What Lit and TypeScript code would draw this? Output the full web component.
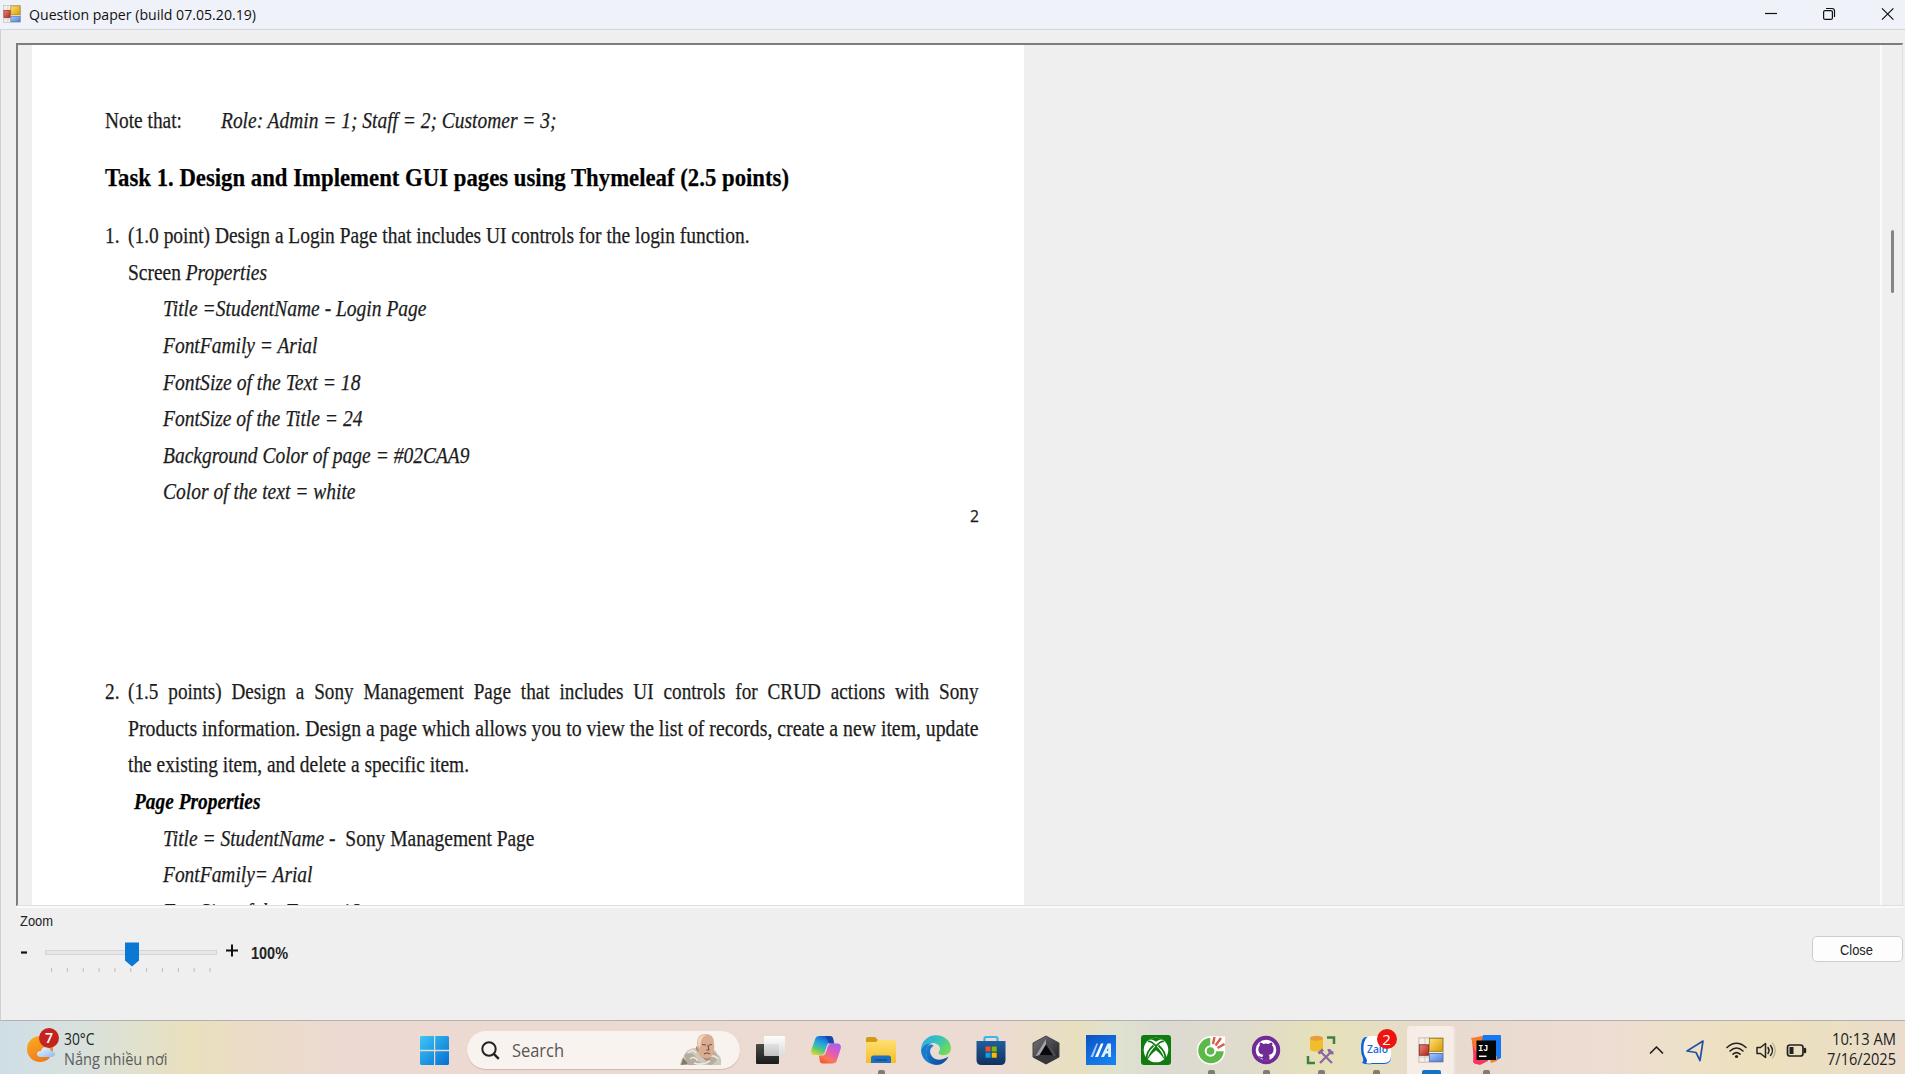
import { LitElement, html, css, svg, nothing } from "lit";
import { customElement, property, query } from "lit/decorators.js";

/** Condenses or stretches its slotted line horizontally to an exact width. */
@customElement("fit-text")
class FitText extends LitElement {
  static styles = css`
    :host { display: block; flex: none; white-space: pre; }
    .ink { display: inline-block; transform-origin: 0 50%; white-space: pre; }
  `;
  @property({ type: Number }) width = 100;
  @query(".ink") ink!: HTMLElement;
  firstUpdated() {
    const natural = this.ink.getBoundingClientRect().width;
    this.style.width = this.width + "px";
    if (natural > 0) this.ink.style.transform = `scaleX(${this.width / natural})`;
  }
  render() {
    return html`<span class="ink"><slot></slot></span>`;
  }
}

const formsIcon = svg`
  <rect x="1" y="1" width="28" height="28" fill="#f4f0e6" stroke="#bdb8ae" stroke-width="1"/>
  <path d="M1 9h11M1 23h28M8 1v28" stroke="#c9c5bd" stroke-width="1"/>
  <rect x="13" y="1.500" width="15.500" height="15" fill="url(#fy)" stroke="#9c7a12"/>
  <rect x="1.500" y="9" width="10.500" height="12" fill="url(#fr)" stroke="#8d2620"/>
  <rect x="13" y="19" width="15.500" height="9" fill="url(#fb)" stroke="#4a6fb5"/>
  <defs>
    <linearGradient id="fy" x2="1" y2="1"><stop stop-color="#ffe27a"/><stop offset="1" stop-color="#d79b00"/></linearGradient>
    <linearGradient id="fr" x2="1" y2="1"><stop stop-color="#e88b80"/><stop offset="1" stop-color="#b5261c"/></linearGradient>
    <linearGradient id="fb" x2="1" y2="1"><stop stop-color="#a9c8ff"/><stop offset="1" stop-color="#4d7edb"/></linearGradient>
  </defs>`;

interface App { name: string; art: unknown; running?: boolean; active?: boolean; badge?: string; }

const apps: App[] = [
  { name: "Task view", art: svg`
    <defs><linearGradient id="tv" y2="1" x2="0"><stop stop-color="#4a4a48"/><stop offset="1" stop-color="#1b1b1b"/></linearGradient>
    <linearGradient id="tw" y2="1" x2="0"><stop stop-color="#fff" stop-opacity=".95"/><stop offset="1" stop-color="#dcdcdc" stop-opacity=".85"/></linearGradient></defs>
    <rect x="0" y="9" width="23" height="20" rx="1" fill="url(#tv)"/><rect x="8" y="1" width="21" height="20" rx="1" fill="url(#tw)"/>` },
  { name: "Copilot", art: svg`
    <defs>
      <linearGradient id="c1" x1=".7" y1="0" x2=".2" y2="1"><stop stop-color="#1b4fc4"/><stop offset=".4" stop-color="#21a5e8"/><stop offset=".7" stop-color="#55c77d"/><stop offset="1" stop-color="#d8da2c"/></linearGradient>
      <linearGradient id="c2" x1=".8" y1="0" x2=".2" y2="1"><stop stop-color="#a75df0"/><stop offset=".45" stop-color="#e65bb5"/><stop offset=".75" stop-color="#fb7659"/><stop offset="1" stop-color="#f2562c"/></linearGradient>
    </defs>
    <path d="M9 1h9c2 0 3 1 3.500 3l1 4h-3c-2 0-3 1-3.700 3l-2 6c-.7 2-2 3-4 3H4c-3 0-4.500-2-3.700-5L4 4.500C4.700 2 6 1 9 1z" fill="url(#c1)"/>
    <path d="M21 28.500h-9c-2 0-3-1-3.300-3L8 20.500h3c2 0 3.200-1 4-3.500l1.800-5.500c.7-2 2-3 4-3H26c3 0 4.500 2 3.700 5L26 25c-.7 2.500-2 3.500-5 3.500z" fill="url(#c2)"/>
    <path d="M14 1h5c2 0 2.800 1 3.300 3l1 4.500h-5z" fill="#1746ad"/>` },
  { name: "File Explorer", running: true, art: svg`
    <defs><linearGradient id="fe" y2="1" x2="0"><stop stop-color="#ffe073"/><stop offset="1" stop-color="#f5bd25"/></linearGradient></defs>
    <path d="M0 4q0-2 2-2h7l3 3v4H0z" fill="#d49a12"/><path d="M0 7h10l2-2h18v23H0z" fill="url(#fe)"/>
    <path d="M5 28v-5q0-2.500 2.500-2.500h15Q25 20.500 25 23v5z" fill="#1d6fc0"/><path d="M9 25h12" stroke="#124f92" stroke-width="1.500"/>` },
  { name: "Edge", art: svg`
    <defs><linearGradient id="e1" x2="1" y2=".6"><stop stop-color="#2ba7e8"/><stop offset=".5" stop-color="#35c1c0"/><stop offset="1" stop-color="#6fdc55"/></linearGradient>
    <linearGradient id="e2" x2="1" y2="1"><stop stop-color="#1b86d8"/><stop offset="1" stop-color="#0c4394"/></linearGradient></defs>
    <path d="M0 15C0 6.500 6.800.3 15 .3S30 6 30 13c0 4.500-3.500 7.200-7.500 7.200-3 0-5-1.200-5-2.500 0-1 1.500-1.600 1.500-4 0-3.200-3.200-5.700-7.500-5.700C6 8 1.500 11 0 15z" fill="url(#e1)"/>
    <path d="M0 15C1.500 11 5.500 8 11 8c-3 1-6 4.500-6 9 0 6.500 5 12 11.500 12.700A15 15 0 0 1 0 15z" fill="#187bd0"/>
    <path d="M12.500 11C9 13 8.700 16 9.500 18.500c1.500 5 7 7.500 12.500 5.500 2-.6 4-1.500 5.500-2.500C25 27 20.500 30 15.500 30 9 29 5 23.500 5 17s5-9.500 7.500-6z" fill="url(#e2)"/>` },
  { name: "Microsoft Store", art: svg`
    <defs><linearGradient id="ms" y2="1" x2="0"><stop stop-color="#1f5f9c"/><stop offset="1" stop-color="#12315c"/></linearGradient></defs>
    <path d="M8.500 7V3.500Q8.500 2 10 2h10q1.500 0 1.500 1.500V7" fill="none" stroke="#3cb7ea" stroke-width="2.200"/>
    <path d="M.5 6h29v19q0 5-5 5h-19q-5 0-5-5z" fill="url(#ms)"/>
    <path fill="#f25022" d="M9.500 11.500h5v5h-5z"/><path fill="#7fba00" d="M15.700 11.500h5v5h-5z"/><path fill="#00a4ef" d="M9.500 17.700h5v5h-5z"/><path fill="#ffb900" d="M15.700 17.700h5v5h-5z"/>` },
  { name: "Armoury", art: svg`
    <defs><linearGradient id="ac" x2="1" y2="1"><stop stop-color="#77777b"/><stop offset="1" stop-color="#1b1b1f"/></linearGradient></defs>
    <path d="M15 1l13 7v14l-13 7-13-7V8z" fill="url(#ac)" stroke="#46464a"/>
    <path d="M15 4L4 22l5-2 6-9z" fill="#a2a2a8"/><path d="M15 4l11 18-4.500-1.500L15 11z" fill="#4b4b50"/><path d="M15 9.500l7 11L8.500 20z" fill="#09090b"/><path d="M2 22l13 7 13-7-7-1.500L9 20z" fill="#36363b"/>` },
  { name: "MyASUS", art: svg`
    <defs><linearGradient id="ma" x2=".6" y2="1"><stop stop-color="#0d52c4"/><stop offset="1" stop-color="#1680ee"/></linearGradient></defs>
    <rect width="30" height="30" fill="url(#ma)"/><path d="M4.500 22L10.500 8.500h1.500L7 22z" fill="#a9cdfb"/><path d="M9 22L15 8.500h2.500L12 22z" fill="#fff"/><path d="M15 22L21.500 8.500H25V22h-2.800v-3.500h-2.500L18 22zM20.800 16h1.400v-3.500z" fill="#e6f1ff" fill-rule="evenodd"/>` },
  { name: "Xbox", art: svg`
    <rect width="30" height="30" rx="3" fill="#107c10"/><circle cx="15" cy="15" r="12.300" fill="#fff"/>
    <path d="M8 4.600C11 4 13.500 5.800 15 6.800 16.500 5.800 19 4 22 4.600 19.500 2.500 10.500 2.500 8 4.600z" fill="#107c10"/>
    <path d="M6.500 24.500C7 20 12 13 15 11c3 2 8 9 8.500 13.500C21 20.500 17.500 17 15 15.200 12.500 17 9 20.500 6.500 24.500z" fill="#107c10"/>
    <path d="M7 6.500c2-.5 5.500 1.800 8 4.700 2.500-2.900 6-5.200 8-4.700M12.500 10.500C8 14.500 5 20 6 24M17.500 10.500C22 14.500 25 20 24 24" fill="none" stroke="#107c10" stroke-width="1.800"/>` },
  { name: "Coc Coc", running: true, art: svg`
    <path d="M15 2A13.500 13.500 0 1 0 28.500 15.500L15 15.500z" fill="#5cb947" stroke="#fff" stroke-width="1.500"/>
    <path d="M15.500 1l13.500 .5V15l-12 0z" fill="#fff"/><path d="M17 9l1.500-7M19.500 10.500L25 3M21.500 13l7-4" stroke="#e2584b" stroke-width="2.400"/>
    <circle cx="14.500" cy="16" r="5.800" fill="#fff"/><circle cx="14.500" cy="16" r="3.800" fill="#5cb947"/>` },
  { name: "GitHub Desktop", running: true, art: svg`
    <circle cx="15" cy="15" r="14.200" fill="#702b96"/><circle cx="15" cy="15" r="10.300" fill="#fff"/>
    <path d="M9 7.500c1.500 0 2.700.9 3.300 1.400a12 12 0 0 1 5.400 0c.6-.5 1.800-1.400 3.300-1.400.6 1.500.3 2.500.1 3 1 1 1.500 2.300 1.500 3.800 0 4.200-2.600 5.200-5 5.500.7.600.9 1.400.9 2.500V25.600h-7v-2.300c-3 .6-3.700-1.300-4.200-2.200 1.600-.5 2 1.500 4.200.8 0-.9.300-1.600.9-2.100-2.400-.3-5-1.300-5-5.500 0-1.500.5-2.800 1.500-3.800-.2-.5-.5-1.500.1-3z" fill="#702b96"/>` },
  { name: "SQL tools", running: true, art: svg`
    <path d="M4 3v12q6 3 13 0V3z" fill="#f2bd2b"/><ellipse cx="10.500" cy="3.300" rx="6.500" ry="2.500" fill="#e79d3c"/>
    <path d="M21 2.500h7V9M2 21v7h7" stroke="#3e8045" stroke-width="2.500" fill="none"/>
    <path d="M14 16l12 12M26 16L14 28" stroke="#8b66a3" stroke-width="2.200"/><path d="M12.500 18.500l4.500-4M23 14q0 4 4.500 4" stroke="#8b66a3" stroke-width="3" fill="none"/>` },
  { name: "Zalo", running: true, badge: "2", art: svg`
    <path d="M5 2h20q5 0 5 5v15q0 7-7 7H11Q6 30 1 28q2-2 1-5Q0 19 0 14 0 2 5 2z" fill="#0b5fd8"/>
    <path d="M9 1h16q5 0 5 5v15q0 7-7 7H11q-3 1-6 0Q7 26 5 23 2 19 2.500 12 3 2 9 1z" fill="#fff"/>
    <text x="6" y="18" font-family="Open Sans, sans-serif" font-size="10" font-weight="600" fill="#1268e6" textLength="21" lengthAdjust="spacingAndGlyphs">Zalo</text>` },
  { name: "Question paper", active: true, art: svg`<g transform="translate(2 2) scale(.87)">${formsIcon}</g>` },
  { name: "IntelliJ IDEA", running: true, art: svg`
    <path d="M1 4l11-3 8 8-3 17-8 4-6-2z" fill="#f03d5f"/><path d="M0 3l12-2 3 9-11 6z" fill="#fb7a29"/><path d="M12 0h17q1 0 1 1v22l-6 3-14-14z" fill="#1678f2"/><path d="M18 20l8 1v5l-6 2z" fill="#fc801d"/><path d="M3 18l8 10q-6 3-9-1z" fill="#fe315d"/>
    <rect x="5.500" y="5.500" width="19.500" height="19.500" fill="#060606"/>
    <text x="7.200" y="15.500" font-family="Liberation Mono, monospace" font-weight="700" font-size="9.500" fill="#fff" textLength="10" lengthAdjust="spacingAndGlyphs">IJ</text><path d="M8 21.300h7.500" stroke="#fff" stroke-width="1.500"/>` },
];

@customElement("task-bar")
class TaskBar extends LitElement {
  static styles = css`
    :host {
      display: flex; align-items: stretch; height: 53px; box-sizing: border-box; overflow: hidden;
      font-family: "Open Sans", "Noto Sans", sans-serif; font-size: 16px; color: #222;
      background: linear-gradient(90deg, #cfdee6 0, #d8e1dd 80px, #e0e1cf 130px, #e9e0bd 190px, #ebdcc8 250px, #ecdad2 340px, #ecdbd2 1000px, #e8dfbf 1075px, #dfe2cf 1120px, #dcdad2 1160px, #dfdbcd 1240px, #e6e1b8 1320px, #e5dfc0 1370px, #e9dad0 1450px, #edddd2 1610px, #ede0c8 1680px, #ece0bd 1760px, #ebdfc4 1840px, #ebdccd 1905px);
    }
    .weather { display: flex; width: 407px; padding-left: 27px; box-sizing: border-box; }
    .sun { position: relative; width: 37px; flex: none; }
    .sun svg { display: block; margin-top: 14px; }
    .count { position: absolute; border-radius: 50%; width: 20px; height: 20px; line-height: 20px; text-align: center; color: #fff; font-size: 14px; background: #c42420; }
    .sun .count { left: 12px; top: 7px; font-weight: 600; }
    .two { display: flex; flex-direction: column; padding-top: 8px; line-height: 20px; }
    .soft { color: #5b5c5a; }
    .start { width: 60px; padding: 15px 0 0 13px; box-sizing: border-box; }
    .start svg { display: block; }
    .search { width: 273px; height: 38px; margin-top: 10px; box-sizing: border-box; border-radius: 19px; display: flex; align-items: center; padding: 0 18px 0 14px; background: #f9f3ef; box-shadow: 0 1px 1px #cbb9ae; }
    .search fit-text { margin-left: 12px; font-size: 18px; color: #5a5654; }
    .search .hero { margin-left: auto; }
    .apps { display: flex; margin-left: 3.500px; }
    .app { position: relative; width: 55px; height: 53px; display: flex; flex-direction: column; align-items: center; }
    .app svg { display: block; margin-top: 14px; flex: none; z-index: 1; overflow: visible; }
    .mark { width: 7px; height: 4px; margin-top: 5px; background: #827a75; border-radius: 2px 2px 0 0; z-index: 1; }
    .active .mark { width: 19px; background: #1673c4; }
    .active::before { content: ""; position: absolute; left: 3.500px; top: 5px; width: 46px; height: 52px; border-radius: 4px; background: #f6ede7; box-shadow: 2px 0 0 #f1e6df; }
    .app .count { left: 28px; top: 8px; font-size: 15px; background: #ec1411; z-index: 2; }
    .tray { flex: 1; display: flex; justify-content: flex-end; padding-right: 9.500px; }
    .tray > svg { margin-top: 12px; flex: none; }
    .clock { display: flex; flex-direction: column; align-items: flex-end; padding-top: 8px; line-height: 20px; margin-left: 20px; }
  `;
  render() {
    return html`
      <div class="weather">
        <div class="sun">
          <svg width="30" height="30" viewBox="0 0 30 30">
            <defs><linearGradient id="s" x2=".6" y2="1"><stop stop-color="#fbb022"/><stop offset="1" stop-color="#ee7a1c"/></linearGradient>
            <linearGradient id="cl" x2="1" y2="1"><stop stop-color="#f2f8ff"/><stop offset="1" stop-color="#8fb9ee"/></linearGradient></defs>
            <circle cx="13" cy="14" r="13" fill="url(#s)"/>
            <path d="M14 22q-4 0-4-3t4-3q1-4 5-4t5 4q4 0 4 3t-4 3z" fill="url(#cl)"/>
          </svg>
          <span class="count">7</span>
        </div>
        <div class="two">
          <fit-text width="30.500">30°C</fit-text>
          <fit-text width="103.500" class="soft">Nắng nhiều nơi</fit-text>
        </div>
      </div>
      <div class="start">
        <svg width="29" height="29" viewBox="0 0 29 29">
          <defs><linearGradient id="w" gradientUnits="userSpaceOnUse" x2="29" y2="29"><stop stop-color="#3dc6f7"/><stop offset="1" stop-color="#0670d0"/></linearGradient></defs>
          <path d="M1 0h13v13.800H0V1zM15.200 0H28l1 1v12.800H15.200zM0 15.200h14V29H1l-1-1zM15.200 15.200H29V28l-1 1H15.200z" fill="url(#w)"/>
        </svg>
      </div>
      <div class="search">
        <svg width="19" height="19" viewBox="0 0 19 19" fill="none" stroke="#222" stroke-width="2"><circle cx="8" cy="8" r="6.700"/><path d="M12.800 12.800l5 5" stroke-width="2.400"/></svg>
        <fit-text width="52">Search</fit-text>
        <svg class="hero" width="42" height="34" viewBox="0 0 42 34">
          <path d="M0 32q1-6 4-9 2-7 10-8l16 1q6 0 7 5 5 2 4 11z" fill="#cfc8bc"/>
          <path d="M1 32l2-7 6 6z" fill="#85796a"/><path d="M4 22q6-5 12 2l6 8H8zM30 17q8 2 8 9l-6 6-8-1z" fill="#b5ad9f"/>
          <path d="M8 20q5-5 8 0M10 26q4-4 8 2M29 24q5-3 9 2M14 30q8 3 16-2" stroke="#efe9df" stroke-width="1.500" fill="none"/>
          <path d="M17 10Q17 1 25.500 1T34 10q1 8-2 13-3 4-7 3-5-1-7-7z" fill="#d9ad92"/>
          <path d="M18 6q3-5 9-4-5 1-6 7l-1 6q-3-3-2-9z" fill="#f0d4c0"/>
          <path d="M22 11.500l4 .5M29 12l3-.5M28 12l.8 5h-2.500M24 21q3-2 6 0" stroke="#77503c" stroke-width="1.200" fill="none"/>
          <path d="M17 13q-2 1 0 5l2 1zM23 24q4 3 8 0l-2 3h-4z" fill="#b08068"/>
        </svg>
      </div>
      <div class="apps">
        ${apps.map((a) => html`
          <div class="app ${a.active ? "active" : ""}">
            <svg width="30" height="30" viewBox="0 0 30 30" aria-label=${a.name}>${a.art}</svg>
            ${a.running || a.active ? html`<span class="mark"></span>` : nothing}
            ${a.badge ? html`<span class="count">${a.badge}</span>` : nothing}
          </div>`)}
      </div>
      <div class="tray">
        <svg width="158" height="34" viewBox="0 0 158 34" fill="none" stroke="#222" stroke-width="1.700" stroke-linecap="round" stroke-linejoin="round">
          <path d="M1.500 20L7.500 14l6 6"/>
          <path d="M54 8L38 18l9 1.500 4 8z" stroke="#2551a5"/>
          <path d="M78 14.500Q87.500 6 97 14.500M81 18Q87.500 12 94 18M84 21.200q3.500-3.200 7 0" stroke-width="1.600"/><circle cx="87.500" cy="23.500" r="1.600" fill="#222" stroke="none"/>
          <path d="M108 14.500h3.500l5-4v14l-5-4H108zM119 14.500q2 3 0 6" stroke-width="1.500"/><path d="M121.500 12.500q4 5 0 10" stroke-width="1.400"/><path d="M123.500 10q5.500 7.500 0 15" stroke="#b8b09b" stroke-width="1.200"/>
          <rect x="138.500" y="12" width="15.500" height="11" rx="2.500"/><path d="M140.500 14h4v7h-4z" fill="#222" stroke="none"/><path d="M156 16v3" stroke-width="2.400"/>
        </svg>
        <div class="clock">
          <fit-text width="64">10:13 AM</fit-text>
          <fit-text width="69">7/16/2025</fit-text>
        </div>
      </div>`;
  }
}

@customElement("question-page")
class QuestionPage extends LitElement {
  static styles = css`
    :host { display: block; width: 992px; box-sizing: border-box; padding: 58px 45px 0 73.200px; background: #fff; color: #1c1c1c; font-family: "Liberation Serif", serif; font-size: 22.500px; -webkit-text-stroke: 0.25px #1c1c1c; }
    .row { display: flex; height: 36.620px; line-height: 36.620px; }
    .label { width: 116px; }
    .num { width: 23px; }
    .heading { margin-top: 20px; font-size: 24.300px; color: #000; }
    .first { margin-top: 22px; }
    .sub { padding-left: 23px; }
    .prop { padding-left: 58px; }
    .mid { padding-left: 29px; color: #000; }
    .pageno { display: flex; justify-content: flex-end; height: 24px; line-height: 24px; margin-top: -7px; font-family: "Open Sans", sans-serif; font-weight: 500; font-size: 17px; }
    .second { margin-top: 146px; }
    .spread { word-spacing: 6px; }
    i, b { white-space: pre; }
  `;
  prop(width: number, body: unknown) {
    return html`<div class="row prop"><fit-text width=${width}>${body}</fit-text></div>`;
  }
  render() {
    return html`
      <div class="row"><div class="label"><fit-text width="77">Note that:</fit-text></div><fit-text width="335.500"><i>Role: Admin = 1; Staff = 2; Customer = 3;</i></fit-text></div>
      <div class="row heading"><fit-text width="684"><b>Task 1. Design and Implement GUI pages using Thymeleaf (2.5 points)</b></fit-text></div>
      <div class="row first"><div class="num"><fit-text width="14.500">1.</fit-text></div><fit-text width="621.500">(1.0 point) Design a Login Page that includes UI controls for the login function.</fit-text></div>
      <div class="row sub"><fit-text width="139">Screen <i>Properties</i></fit-text></div>
      ${this.prop(263.5, html`<i>Title =StudentName - Login Page</i>`)}
      ${this.prop(154.5, html`<i>FontFamily = Arial</i>`)}
      ${this.prop(197.5, html`<i>FontSize of the Text = 18</i>`)}
      ${this.prop(199.5, html`<i>FontSize of the Title = 24</i>`)}
      ${this.prop(306.5, html`<i>Background Color of page = #02CAA9</i>`)}
      ${this.prop(192.5, html`<i>Color of the text = white</i>`)}
      <div class="pageno"><fit-text width="9">2</fit-text></div>
      <div class="row second"><div class="num"><fit-text width="14.500">2.</fit-text></div><fit-text width="850.500"><span class="spread">(1.5 points) Design a Sony Management Page that includes UI controls for CRUD actions with Sony</span></fit-text></div>
      <div class="row sub"><fit-text width="850.500">Products information. Design a page which allows you to view the list of records, create a new item, update</fit-text></div>
      <div class="row sub"><fit-text width="341">the existing item, and delete a specific item.</fit-text></div>
      <div class="row mid"><fit-text width="126.500"><b><i>Page Properties</i></b></fit-text></div>
      ${this.prop(371.5, html`<i>Title = StudentName -  </i>Sony Management Page`)}
      ${this.prop(149.5, html`<i>FontFamily= Arial</i>`)}
      ${this.prop(197.5, html`<i>FontSize of the Text = 18</i>`)}`;
  }
}

@customElement("app-root")
class AppRoot extends LitElement {
  static styles = css`
    :host { display: flex; flex-direction: column; width: 1905px; height: 1074px; overflow: hidden; background: #efefef; }
    .title { height: 30px; display: flex; align-items: center; box-sizing: border-box; padding: 0 11px 1px 3px; background: #f0f2fa; border-bottom: 1px solid #d3d4da; flex: none; }
    .title fit-text { margin-left: 8px; font: 15px/28px "Open Sans", "Noto Sans", sans-serif; color: #111; }
    .title .ctl { margin-left: auto; }
    .body { height: 991px; box-sizing: border-box; border-left: 1px solid #cfcfcf; border-bottom: 1px solid #b3b0b1; display: flex; flex-direction: column; padding: 13px 2px 0 14.500px; }
    .view { height: 863px; box-sizing: border-box; display: flex; border: solid; border-width: 2px 1px 1px 2px; border-color: #7b7e7c #e0e0e0 #dedede #7b7e7c; padding-left: 14.500px; overflow: hidden; box-shadow: 0 2px 0 #fafafa; flex: none; }
    question-page { height: 860px; overflow: hidden; flex: none; }
    .scroll { margin-left: auto; width: 22px; border-left: 2px solid #fbfbfb; box-sizing: border-box; padding: 185px 0 0 9px; }
    .thumb { width: 3px; height: 63px; background: #858585; border-radius: 2px; }
    .foot { display: flex; justify-content: space-between; font: 15px/18px "Liberation Sans", sans-serif; color: #222; }
    .zoomlabel { margin: 6px 0 0 4.500px; }
    .zoom { display: flex; }
    .zoom svg { display: block; margin-left: 4.500px; }
    .pct { margin: 15px 0 0 12px; font-weight: 700; font-size: 16px; }
    .close { width: 91px; height: 26px; margin-top: 30px; box-sizing: border-box; border: 1px solid #cdcdcd; border-radius: 5px; background: #fdfdfd; display: flex; justify-content: center; padding-right: 2px; line-height: 25px; }
  `;
  render() {
    const ticks = Array.from({ length: 11 }, (_, i) => 31.5 + i * 15.85);
    return html`
      <div class="title">
        <svg width="18" height="18" viewBox="0 0 30 30">${formsIcon}</svg>
        <fit-text width="227">Question paper (build 07.05.20.19)</fit-text>
        <svg class="ctl" width="129" height="14" viewBox="0 0 129 14" fill="none" stroke="#111" stroke-width="1.200">
          <path d="M0 6.500h12"/><rect x="58.600" y="3.600" width="8.800" height="8.800" rx="1.500"/><path d="M61 1.500h6q2.500 0 2.500 2.500v6"/><path d="M117 1.300l11.400 11.400M128.400 1.300L117 12.700"/>
        </svg>
      </div>
      <div class="body">
        <div class="view">
          <question-page></question-page>
          <div class="scroll"><div class="thumb"></div></div>
        </div>
        <div class="foot">
          <div>
            <div class="zoomlabel"><fit-text width="33">Zoom</fit-text></div>
            <div class="zoom">
              <svg width="219" height="50" viewBox="0 0 219 50">
                <path d="M1 22.500h6" stroke="#111" stroke-width="2.200"/>
                <rect x="25.500" y="20.500" width="171" height="4" fill="#e6e6e6" stroke="#d5d5d5"/>
                <path d="M105 12.500h14v18l-7 6-7-6z" fill="#0b78d4"/>
                ${ticks.map((x) => svg`<path d=${`M${x} 38v4`} stroke="#bdbdbd"/>`)}
                <path d="M206 20.500h12M212 14.500v12" stroke="#111" stroke-width="2"/>
              </svg>
              <div class="pct"><fit-text width="37">100%</fit-text></div>
            </div>
          </div>
          <div class="close"><fit-text width="33">Close</fit-text></div>
        </div>
      </div>
      <task-bar></task-bar>`;
  }
}
